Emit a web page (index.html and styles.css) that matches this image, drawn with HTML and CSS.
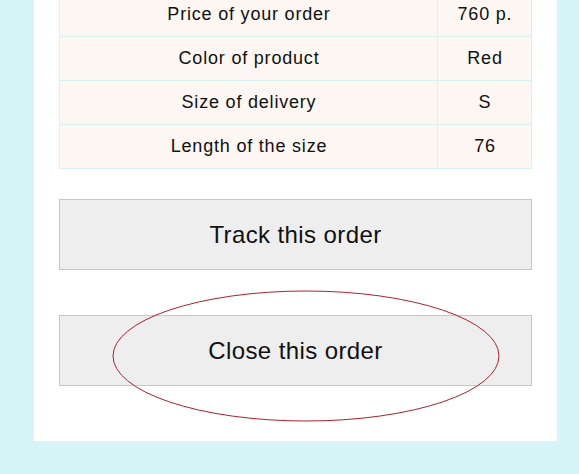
FILE: index.html
```html
<!DOCTYPE html>
<html>
<head>
<meta charset="utf-8">
<link rel="stylesheet" href="styles.css">
</head>
<body>
<div class="panel">
  <table class="details">
    <colgroup><col class="col-label"><col class="col-value"></colgroup>
    <tr><td class="label">Price of your order</td><td class="value">760 p.</td></tr>
    <tr><td class="label">Color of product</td><td class="value">Red</td></tr>
    <tr><td class="label">Size of delivery</td><td class="value">S</td></tr>
    <tr><td class="label">Length of the size</td><td class="value">76</td></tr>
  </table>
  <button class="action">Track this order</button>
  <div class="close-wrap">
    <button class="action close">Close this order</button>
    <svg class="ellipse" width="390" height="134" viewBox="0 0 390 134">
      <ellipse cx="195" cy="67" rx="193" ry="65" fill="none" stroke="#b0202e" stroke-width="1"/>
    </svg>
  </div>
</div>
</body>
</html>
```
FILE: styles.css
```css
html, body {
  margin: 0;
  padding: 0;
  background: #d7f4f9;
  font-family: "Liberation Sans", Arial, sans-serif;
  color: #111;
}
.panel {
  margin-left: 34px;
  width: 523px;
  height: 441px;
  background: #fff;
  box-sizing: border-box;
  padding: 0 25px 0 25px;
  display: flex;
  flex-direction: column;
}
.details {
  margin-top: -8px;
  width: 472px;
  table-layout: fixed;
  border-collapse: collapse;
  background: #fcf7f2;
  border: 1px solid #d6f3ef;
  font-size: 18px;
  letter-spacing: 0.8px;
}
.col-label { width: 378px; }
.col-value { width: 94px; }
.details td {
  border: 1px solid #d6f3ef;
  height: 43px;
  padding: 0 0 0 1px;
  text-align: center;
}
.action {
  -webkit-appearance: none;
  appearance: none;
  box-sizing: border-box;
  margin-top: 30px;
  width: 473px;
  height: 71px;
  background-color: #eeeeee;
  border: none;
  box-shadow: inset 0 0 0 1px #a2d6d6;
  font-family: "Liberation Sans", Arial, sans-serif;
  font-size: 24px;
  letter-spacing: 0.4px;
  color: #111;
  padding: 0;
}
.close-wrap {
  position: relative;
  margin-top: 45px;
}
.close-wrap .action { margin-top: 0; display: block; }
.ellipse {
  position: absolute;
  left: 52px;
  top: -26px;
}
```
